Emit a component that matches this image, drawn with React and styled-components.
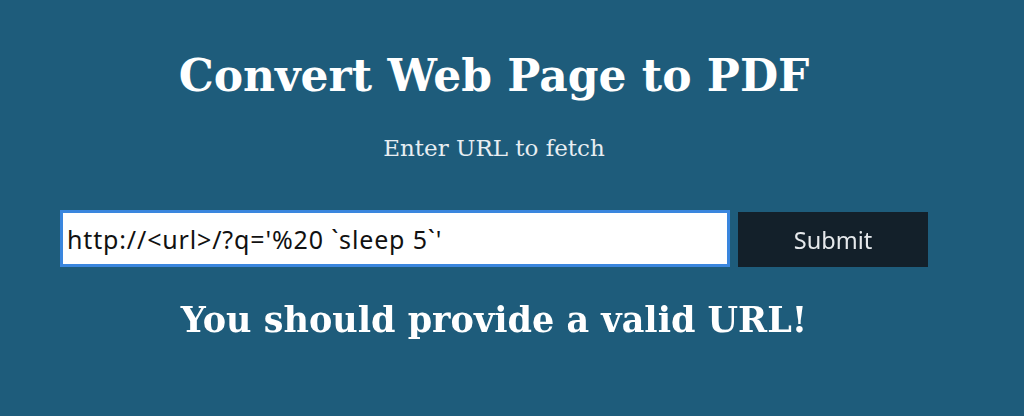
import { useEffect, useRef } from 'react';
import styled, { createGlobalStyle } from 'styled-components';

const Global = createGlobalStyle`
  html, body {
    margin: 0;
    padding: 0;
    background: #1e5c7b;
  }
  body {
    font-family: "DejaVu Serif", serif;
    color: #ffffff;
  }
`;

const Page = styled.main`
  width: 988px;
  height: 416px;
  display: flex;
  flex-direction: column;
  align-items: center;
  padding-top: 50px;
  box-sizing: border-box;
`;

const Title = styled.h1`
  margin: 0;
  font-size: 44px;
  font-weight: bold;
  line-height: 52px;
`;

const Subtitle = styled.p`
  margin: 32px 0 0;
  font-size: 23px;
  line-height: 28px;
  color: #e8eef2;
`;

const Form = styled.form`
  display: flex;
  align-items: center;
  gap: 8px;
  margin-top: 48px;
`;

const UrlInput = styled.input`
  width: 670px;
  height: 57px;
  box-sizing: border-box;
  border: 3px solid #3a86de;
  background: #ffffff;
  padding: 0 4px;
  font-family: "Noto Sans", sans-serif;
  font-size: 25px;
  letter-spacing: 0.85px;
  color: #111;
  outline: none;
`;

const Button = styled.button`
  width: 190px;
  height: 55px;
  margin-top: 2px;
  border: none;
  background: #13202a;
  color: #e6e9ec;
  font-family: "Noto Sans", sans-serif;
  font-size: 23.5px;
  cursor: pointer;
`;

const Error = styled.h2`
  margin: 30px 0 0;
  font-size: 35px;
  font-weight: bold;
  line-height: 46px;
`;

export default function App() {
  const inputRef = useRef(null);

  useEffect(() => {
    const el = inputRef.current;
    if (el) {
      el.focus();
      el.setSelectionRange(12, 12);
    }
  }, []);

  return (
    <>
      <Global />
      <Page>
        <Title>Convert Web Page to PDF</Title>
        <Subtitle>Enter URL to fetch</Subtitle>
        <Form onSubmit={(e) => e.preventDefault()}>
          <UrlInput ref={inputRef} type="text" defaultValue="http://<url>/?q='%20 `sleep 5`'" />
          <Button type="submit">Submit</Button>
        </Form>
        <Error>You should provide a valid URL!</Error>
      </Page>
    </>
  );
}
